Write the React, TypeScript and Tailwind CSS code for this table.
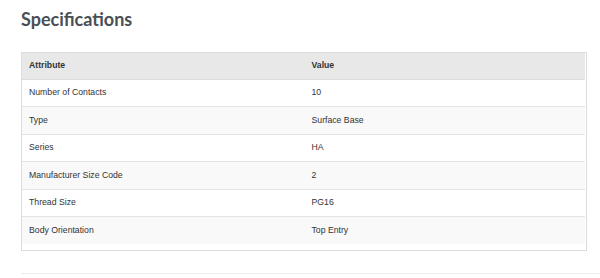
const rows = [
  ['Number of Contacts', '10'],
  ['Type', 'Surface Base'],
  ['Series', 'HA'],
  ['Manufacturer Size Code', '2'],
  ['Thread Size', 'PG16'],
  ['Body Orientation', 'Top Entry'],
]

export default function App() {
  return (
    <div className="w-[600px] h-[278px] overflow-hidden bg-white pt-[7px]">
      <h2
        className="pl-[21px] text-[18px] leading-[24px] font-bold text-[#4a4f55]"
        style={{ fontFamily: 'Lato, "DejaVu Sans", sans-serif' }}
      >
        Specifications
      </h2>
      <div
        className="mt-[21px] ml-[21px] w-[566px] border border-[#dcdcdc] pr-[1px] pb-[6px]"
        style={{ fontFamily: '"Liberation Sans", Arial, sans-serif' }}
      >
        <table className="w-full border-collapse text-[8.7px] text-[#333]">
          <thead>
            <tr className="h-[26px] bg-[#e8e8e8]">
              <th className="w-1/2 text-left font-bold pl-[7px] border-b border-[#dcdcdc]">Attribute</th>
              <th className="w-1/2 text-left font-bold pl-[8px] border-b border-[#dcdcdc]">Value</th>
            </tr>
          </thead>
          <tbody>
            {rows.map(([k, v], i) => (
              <tr
                key={k}
                className={`h-[27.5px] ${i % 2 === 1 ? 'bg-[#f9f9f9]' : 'bg-white'} ${i < rows.length - 1 ? 'border-b border-[#e4e4e4]' : ''}`}
              >
                <td className="pl-[7px]">{k}</td>
                <td className="pl-[8px]">{v}</td>
              </tr>
            ))}
          </tbody>
        </table>
      </div>
      <div className="mt-[22px] ml-[21px] h-px bg-[#ececec]" />
    </div>
  )
}
